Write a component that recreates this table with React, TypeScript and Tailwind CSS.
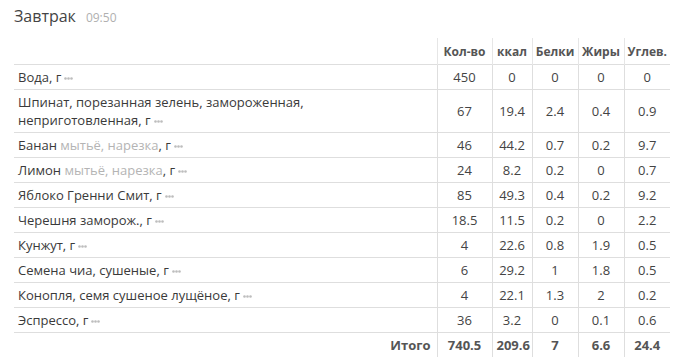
import React from 'react'

type Row = {
    name: string
    note?: string
    qty: string
    kcal: string
    p: string
    f: string
    c: string
}

const rows: Row[] = [
    { name: 'Вода', qty: '450', kcal: '0', p: '0', f: '0', c: '0' },
    {
        name: 'Шпинат, порезанная зелень, замороженная, неприготовленная',
        qty: '67',
        kcal: '19.4',
        p: '2.4',
        f: '0.4',
        c: '0.9',
    },
    { name: 'Банан', note: 'мытьё, нарезка', qty: '46', kcal: '44.2', p: '0.7', f: '0.2', c: '9.7' },
    { name: 'Лимон', note: 'мытьё, нарезка', qty: '24', kcal: '8.2', p: '0.2', f: '0', c: '0.7' },
    { name: 'Яблоко Гренни Смит', qty: '85', kcal: '49.3', p: '0.4', f: '0.2', c: '9.2' },
    { name: 'Черешня заморож.', qty: '18.5', kcal: '11.5', p: '0.2', f: '0', c: '2.2' },
    { name: 'Кунжут', qty: '4', kcal: '22.6', p: '0.8', f: '1.9', c: '0.5' },
    { name: 'Семена чиа, сушеные', qty: '6', kcal: '29.2', p: '1', f: '1.8', c: '0.5' },
    { name: 'Конопля, семя сушеное лущёное', qty: '4', kcal: '22.1', p: '1.3', f: '2', c: '0.2' },
    { name: 'Эспрессо', qty: '36', kcal: '3.2', p: '0', f: '0.1', c: '0.6' },
]

// little "more" dots after the unit
const Dots = () => (
    <svg width="9" height="3" viewBox="0 0 9 3" className="inline-block ml-[3px] align-middle">
        <circle cx="1.5" cy="1.5" r="1.3" fill="#bdbdbd" />
        <circle cx="4.5" cy="1.5" r="1.3" fill="#bdbdbd" />
        <circle cx="7.5" cy="1.5" r="1.3" fill="#bdbdbd" />
    </svg>
)

const numCell = 'border-l border-[#dedede] text-center px-1 py-[3px] align-middle'

const App = () => {
    return (
        <div
            className="bg-white w-[680px] h-[363px] pl-[14px] pr-[10px] pt-[4px] text-[#444]"
            style={{ fontFamily: '"Open Sans", "Liberation Sans", sans-serif' }}
        >
            <div className="flex items-baseline gap-[10px] h-[34px]">
                <span className="text-[16px] text-[#444]">Завтрак</span>
                <span className="text-[12px] text-[#b0b0b0]">09:50</span>
            </div>
            <table className="table-fixed border-collapse w-[656px] text-[13px] leading-[18px]">
                <colgroup>
                    <col className="w-[423px]" />
                    <col className="w-[55px]" />
                    <col className="w-[40px]" />
                    <col className="w-[46px]" />
                    <col className="w-[46px]" />
                    <col className="w-[46px]" />
                </colgroup>
                <thead>
                    <tr className="h-[26px] border-b border-[#dedede] text-[12px] font-bold text-[#555]">
                        <th></th>
                        <th className="border-l border-[#e6e6e6] text-center align-bottom pb-[3px]">Кол-во</th>
                        <th className="border-l border-[#e6e6e6] text-center align-bottom pb-[3px]">ккал</th>
                        <th className="border-l border-[#e6e6e6] text-center align-bottom pb-[3px]">Белки</th>
                        <th className="border-l border-[#e6e6e6] text-center align-bottom pb-[3px]">Жиры</th>
                        <th className="border-l border-[#e6e6e6] text-center align-bottom pb-[3px]">Углев.</th>
                    </tr>
                </thead>
                <tbody>
                    {rows.map((r) => (
                        <tr key={r.name} className="border-b border-[#dedede]">
                            <td className="pl-[4px] pr-[100px] py-[3px] text-[#3a3a3a]">
                                {r.name}
                                {r.note && <span className="text-[#b4b4b4]"> {r.note}</span>}
                                , г<Dots />
                            </td>
                            <td className={numCell}>{r.qty}</td>
                            <td className={numCell}>{r.kcal}</td>
                            <td className={numCell}>{r.p}</td>
                            <td className={numCell}>{r.f}</td>
                            <td className={numCell}>{r.c}</td>
                        </tr>
                    ))}
                    <tr className="font-bold text-[#555]">
                        <td className="text-right pr-[6px] py-[3px]">Итого</td>
                        <td className={numCell}>740.5</td>
                        <td className={numCell}>209.6</td>
                        <td className={numCell}>7</td>
                        <td className={numCell}>6.6</td>
                        <td className={numCell}>24.4</td>
                    </tr>
                </tbody>
            </table>
        </div>
    )
}

export default App
